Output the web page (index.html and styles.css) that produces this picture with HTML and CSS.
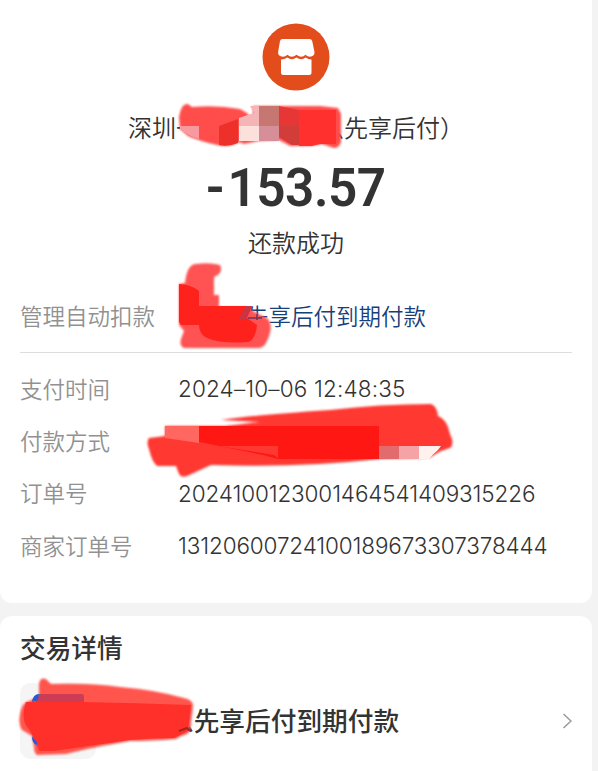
FILE: index.html
```html
<!DOCTYPE html>
<html lang="zh-CN">
<head>
<meta charset="utf-8">
<title>账单详情</title>
<link rel="stylesheet" href="styles.css">
</head>
<body>
<main class="page">
  <section class="card bill">
    <header class="summary">
      <svg class="shop" viewBox="0 0 68 68" aria-hidden="true">
        <circle cx="34" cy="34" r="33.5" fill="#e34d1c"/>
        <path d="M20.500 16H47.500Q49.600 16 50.200 18L52.400 28.500Q53 32 50 33.300Q46.500 34.500 43.500 31.800Q39.500 35.500 34.500 31.800Q29.500 35.500 25.500 31.800Q22.500 34.500 18.700 33.300Q15.600 32 16.200 28.500L18 18Q18.500 16 20.500 16Z" fill="#fff"/>
        <path d="M19 36.500Q22 36.500 25.500 34.500Q29.500 38 34.500 34.500Q39.500 38 43.500 34.500Q46.500 36.500 49.500 36.500V49.500Q49.500 52 47 52H21.500Q19 52 19 49.500Z" fill="#fff"/>
      </svg>
      <h1 class="payee">深圳一<span class="payee-gap"></span>么先享后付）</h1>
      <p class="amount"><span class="minus">-</span><span class="digits">153.57</span></p>
      <p class="status">还款成功</p>
    </header>
    <div class="row auto"><span class="label">管理自动扣款</span><a class="link"><span class="link-gap"></span>先享后付到期付款</a></div>
    <div class="rows">
      <div class="row"><span class="label">支付时间</span><span class="value time">2024–10–06 12:48:35</span></div>
      <div class="row"><span class="label">付款方式</span></div>
      <div class="row"><span class="label">订单号</span><span class="value number">2024100123001464541409315226</span></div>
      <div class="row"><span class="label">商家订单号</span><span class="value number">13120600724100189673307378444</span></div>
    </div>
  </section>
  <section class="card detail">
    <h2 class="detail-title">交易详情</h2>
    <div class="item">
      <span class="thumb"></span>
      <span class="item-name">么先享后付到期付款</span>
      <svg class="chevron" viewBox="0 0 10 16" aria-hidden="true"><path d="M1.500 1L9 8L1.500 15" fill="none" stroke="#999" stroke-width="1.500"/></svg>
    </div>
  </section>
  <svg class="marks" viewBox="0 0 598 771" aria-hidden="true">
    <defs><filter id="soft" x="-5%" y="-10%" width="110%" height="120%"><feGaussianBlur stdDeviation="0.800"/></filter></defs>
    <g>
      <path d="M179 117Q181 103 188 104L192 107Q218 105 240 109L247 113L253 120V106H320L338 108L341 114V141Q340 148 334 148L322 144L310 146H290L279 140L259 141L244 144L239 142Q230 148 217 145Q199 141 188 136L180 129Z" fill="#ff4d4b" filter="url(#soft)"/>
      <path d="M180 126H199V139Q188 136 180 129Z" fill="#f69a9f"/>
      <path d="M219 126L238 119V143Q228 147 219 145Z" fill="#ed3029"/>
      <path d="M250 106H259V141H239V118Q250 114 254 113Z" fill="#f5b4b6"/>
      <path d="M239 126H259V141H239Z" fill="#fbe0dc"/>
      <path d="M259 106H279V126H259Z" fill="#c77771"/>
      <path d="M259 126H279V141H259Z" fill="#d68e98"/>
      <path d="M279 106L299 110V126H279Z" fill="#e73636"/>
      <path d="M279 126H299V145H292L279 137Z" fill="#d33d39"/>
      <path d="M299 110H336V144H320L312 146H299Z" fill="#ff302d"/>
    </g>
    <g>
      <path d="M185 283Q187 264 196 264Q210 262 220 265Q223 271 218 275L214 277V295H219V307H246L253 311L268 319Q274 326 267 341Q264 349 256 348L184 348Q179 346 181 339L184 331L179 325V284Z" fill="#ff5352" filter="url(#soft)"/>
      <path d="M179 284Q190 284 199 291V306H252L247 318L257 325Q255 341 248 342Q221 344 207 338Q199 334 199 325H181L179 322Z" fill="#ff211c"/>
      <path d="M246 306H252L246 319H239Z" fill="#c83544"/>
      <path d="M248 318H262M257 314V320" fill="none" stroke="#6b3560" stroke-width="1.500"/>
    </g>
    <g>
      <path d="M149 438L165 436V426H225L260 422L221 420Q255 415 330 410Q380 404 431 404Q437 406 438 416Q447 419 450 434Q455 444 450 448L441 451L429 458L379 459Q300 468 211 465L187 476Q181 478 179 474L176 466H157Q152 462 149 449Q146 442 149 438Z" fill="#ff3932" filter="url(#soft)"/>
      <path d="M179 426H379V459H278L263 455L180 438Z" fill="#ff1714"/>
      <path d="M165 426H199V443L165 438Z" fill="#ff6760"/>
      <path d="M218 446H278V458L274 455Z" fill="#ff3832"/>
      <path d="M379 446H399V459H379Z" fill="#e16b6d"/>
      <path d="M399 446H419V459H399Z" fill="#f5a3a5"/>
      <path d="M419 446H441L438 450Q432 455 429 459H419Z" fill="#fff1ee"/>
    </g>
    <g>
      <path d="M39 684Q40 677 46 679L51 684Q93 683 120 687Q156 690 184 698Q194 700 193 707L190 731Q187 735 181 736L176 739Q150 741 130 741Q89 748 66 754L37 755Q34 753 34 747L32 736L22 730Q18 724 20 714Q22 702 29 701L39 697Z" fill="#ff554e" filter="url(#soft)"/>
      <path d="M26 702H84Q136 703 191 705L188 731L174 738Q151 738 130 740Q88 746 54 751H39L36 742L29 729Q20 721 26 702Z" fill="#ff302a"/>
      <path d="M39 694H82Q84 694 84 697V702H35Q36 697 39 694Z" fill="#cc3c55"/>
      <path d="M32 702Q33 694 39 694L38 700ZM32 736L37 742V745Q32 744 32 736Z" fill="#285bd1"/>
      <path d="M179 731L187 728L190 731" fill="none" stroke="#a02721" stroke-width="2"/>
    </g>
  </svg>
</main>
</body>
</html>
```
FILE: styles.css
```css
* { box-sizing: border-box; margin: 0; padding: 0; }
body {
  background: #f3f3f3;
  color: #333;
  font-family: Inter, "Noto Sans CJK SC", sans-serif;
}
.page {
  position: relative;
  width: 598px;
  height: 771px;
  overflow: hidden;
  display: flex;
  flex-direction: column;
  gap: 13px;
}
.card { width: 592px; background: #fff; padding: 0 20px; flex: none; }
.bill { height: 602.5px; border-radius: 0 0 12px 12px; padding-top: 23px; }
.summary { display: flex; flex-direction: column; align-items: center; }
.shop { width: 68px; height: 68px; }
.payee {
  height: 36px;
  margin-top: 18px;
  font: 350 24px/36px "Noto Sans CJK SC", sans-serif;
  white-space: nowrap;
}
.payee-gap { display: inline-block; width: 120px; }
.amount {
  display: flex;
  height: 60px;
  margin-top: 13px;
  font: 600 54px/60px Roboto, sans-serif;
  transform: scaleX(0.95);
}
.minus { margin-right: 3px; }
.digits { letter-spacing: -0.5px; }
.status { margin-top: 6px; font: 350 24px/36px "Noto Sans CJK SC", sans-serif; }
.row { display: flex; align-items: center; height: 52.3px; white-space: nowrap; }
.label {
  width: 159px;
  padding-bottom: 3px;
  color: #919191;
  font: 350 22.5px/32px "Noto Sans CJK SC", sans-serif;
}
.auto { height: 72px; margin-top: 21px; border-bottom: 1px solid #ddd; }
.link { padding-bottom: 3px; color: #173f7b; font: 350 22.5px/32px "Noto Sans CJK SC", sans-serif; }
.link-gap { display: inline-block; width: 67px; }
.rows { padding-top: 10px; }
.value { margin-left: -1px; font-size: 22.5px; line-height: 32px; font-weight: 350; }
.time { letter-spacing: 0.15px; }
.number { letter-spacing: -0.13px; }
.detail { height: 180px; border-radius: 12px 12px 0 0; padding-top: 13px; }
.detail-title { font: 500 25.7px/36px "Noto Sans CJK SC", sans-serif; }
.item { display: flex; align-items: center; height: 76px; margin-top: 18px; }
.thumb { width: 76px; height: 76px; border-radius: 10px; background: #f5f5f6; }
.item-name { margin-left: 72px; padding-bottom: 2px; font: 500 25.7px/36px "Noto Sans CJK SC", sans-serif; }
.chevron { width: 10px; height: 16px; margin-left: auto; }
.marks { position: absolute; inset: 0; width: 598px; height: 771px; pointer-events: none; }
```
